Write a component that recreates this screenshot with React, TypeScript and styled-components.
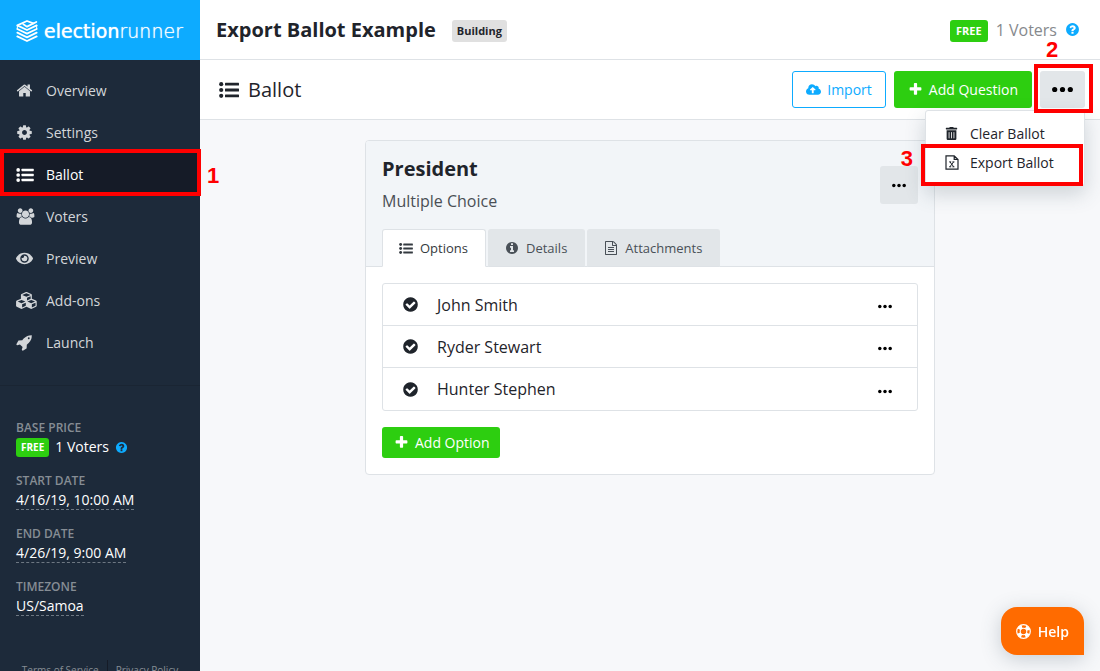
import React from 'react';
import styled, { createGlobalStyle, css } from 'styled-components';
import { FaEye, FaCloudUploadAlt, FaTrashAlt } from 'react-icons/fa';

const color = {
  blue: '#0dabff',
  green: '#2dce10',
  orange: '#ff6b00',
  red: '#ff0000',
  ink: '#1f242b',
  muted: '#86898d',
  line: '#dee2e6',
  grey: '#e2e6e9',
  sidebar: '#1d2a3a',
  sidebarActive: '#151b27',
};

const GlobalStyle = createGlobalStyle`
  *, *::before, *::after { box-sizing: border-box; }
  body {
    margin: 0;
    background: #f7f8fa;
    color: ${color.ink};
    font-family: 'Open Sans', 'Noto Sans', sans-serif;
    font-size: 16px;
    line-height: 24px;
  }
  h1, h2, h3, p, ul, dl, dd { margin: 0; padding: 0; }
  ul { list-style: none; }
  button { font-family: inherit; margin: 0; cursor: pointer; }
  a { color: inherit; text-decoration: none; }
  svg { display: block; flex: none; }
`;

/* ---------- icons ---------- */

type IconProps = { size?: number };

const glyph = (d: string, w = 1792, h = 1792) => ({ size = 16 }: IconProps) => (
  <svg height={size} width={Math.round((size * w) / h)} viewBox={`0 0 ${w} ${h}`} fill="currentColor" aria-hidden="true">
    <path d={d} />
  </svg>
);

const disc = 'q0 209-103 385.5t-279.5 279.5-385.5 103-385.5-103-279.5-279.5-103-385.5 103-385.5 279.5-279.5 385.5-103 385.5 103 279.5 279.5 103 385.5z';

const HomeIcon = glyph('M1472 992v480q0 26-19 45t-45 19h-384v-384h-256v384h-384q-26 0-45-19t-19-45v-480q0-1 .5-3t.5-3l575-474 575 474q1 2 1 6zm223-69l-62 74q-8 9-21 11h-3q-13 0-21-7l-692-577-692 577q-12 8-24 7-13-2-21-11l-62-74q-8-10-7-23.5t11-21.5l719-599q32-26 76-26t76 26l244 204v-195q0-14 9-23t23-9h192q14 0 23 9t9 23v408l219 182q10 8 11 21.5t-7 23.5z');
const CogIcon = glyph('M1152 896q0-106-75-181t-181-75-181 75-75 181 75 181 181 75 181-75 75-181zm512-109v222q0 12-8 23t-20 13l-185 28q-19 54-39 91 35 50 107 138 10 12 10 25t-9 23q-27 37-99 108t-94 71q-12 0-26-9l-138-108q-44 23-91 38-16 136-29 186-7 28-36 28h-222q-14 0-24.5-8.5t-11.5-21.5l-28-184q-49-16-90-37l-141 107q-10 9-25 9-14 0-25-11-126-114-165-168-7-10-7-23 0-12 8-23 15-21 51-66.5t54-70.5q-27-50-41-99l-183-27q-13-2-21-12.5t-8-23.5v-222q0-12 8-23t19-13l186-28q14-46 39-92-40-57-107-138-10-12-10-24 0-10 9-23 26-36 98.5-107.5t94.5-71.5q13 0 26 10l138 107q44-23 91-38 16-136 29-186 7-28 36-28h222q14 0 24.5 8.5t11.5 21.5l28 184q49 16 90 37l142-107q9-9 24-9 13 0 25 10 129 119 165 170 7 8 7 22 0 12-8 23-15 21-51 66.5t-54 70.5q26 50 41 98l183 28q13 2 21 12.5t8 23.5z');
const UsersIcon = glyph('M657 896q-162 5-265 128h-134q-82 0-138-40.5t-56-118.5q0-353 124-353 6 0 43.5 21t97.5 42.5 119 21.5q67 0 133-23-5 37-5 66 0 139 81 256zm1071 637q0 120-73 189.5t-194 69.5h-874q-121 0-194-69.5t-73-189.5q0-53 3.5-103.5t14-109 26.5-108.5 43-97.5 62-81 85.5-53.5 111.5-20q10 0 43 21.5t73 48 107 48 135 21.5 135-21.5 107-48 73-48 43-21.5q61 0 111.5 20t85.5 53.5 62 81 43 97.5 26.5 108.5 14 109 3.5 103.5zm-1024-1277q0 106-75 181t-181 75-181-75-75-181 75-181 181-75 181 75 75 181zm704 384q0 159-112.5 271.5t-271.5 112.5-271.5-112.5-112.5-271.5 112.5-271.5 271.5-112.5 271.5 112.5 112.5 271.5zm576 225q0 78-56 118.5t-138 40.5h-134q-103-123-265-128 81-117 81-256 0-29-5-66 66 23 133 23 59 0 119-21.5t97.5-42.5 43.5-21q124 0 124 353zm-128-609q0 106-75 181t-181 75-181-75-75-181 75-181 181-75 181 75 75 181z', 2048);
const CubesIcon = glyph('M640 1632l384-192v-314l-384 164v342zm-64-454l404-173-404-173-404 173zm1088 454l384-192v-314l-384 164v342zm-64-454l404-173-404-173-404 173zm-448-293l384-165v-266l-384 164v267zm-64-379l441-189-441-189-441 189zm1088 518v416q0 36-19 67t-52 47l-448 224q-25 14-57 14t-57-14l-448-224q-4-2-7-4-2 2-7 4l-448 224q-25 14-57 14t-57-14l-448-224q-33-16-52-47t-19-67v-416q0-38 21.5-70t56.5-48l434-186v-400q0-38 21.5-70t56.5-48l448-192q23-10 50-10t50 10l448 192q35 16 56.5 48t21.5 70v400l434 186q36 16 57 48t21 70z', 2304);
const RocketIcon = glyph('M1440 448q0-40-28-68t-68-28-68 28-28 68 28 68 68 28 68-28 28-68zm224-288q0 249-75.5 430.5t-253.5 360.5q-81 80-195 176l-20 379q-2 16-16 26l-384 224q-7 4-16 4-12 0-23-9l-64-64q-13-14-8-32l85-276-281-281-276 85q-3 1-9 1-14 0-23-9l-64-64q-17-19-5-39l224-384q10-14 26-16l379-20q96-114 176-195 188-187 358-258t431-71q14 0 24 9.5t10 22.5z');
const PlusIcon = glyph('M1600 736v192q0 40-28 68t-68 28h-416v416q0 40-28 68t-68 28h-192q-40 0-68-28t-28-68v-416h-416q-40 0-68-28t-28-68v-192q0-40 28-68t68-28h416v-416q0-40 28-68t68-28h192q40 0 68 28t28 68v416h416q40 0 68 28t28 68z');
const CheckIcon = glyph('M1412 734q0-28-18-46l-91-90q-19-19-45-19t-45 19l-408 407-226-226q-19-19-45-19t-45 19l-91 90q-18 18-18 46 0 27 18 45l362 362q19 19 45 19 27 0 46-19l543-543q18-18 18-45zm252 162' + disc);
const QuestionIcon = glyph('M1024 1376v-192q0-14-9-23t-23-9h-192q-14 0-23 9t-9 23v192q0 14 9 23t23 9h192q14 0 23-9t9-23zm256-672q0-88-55.5-163t-138.5-116-170-41q-243 0-371 213-15 24 8 42l132 100q7 6 19 6 16 0 25-12 53-68 86-92 34-24 86-24 48 0 85.5 26t37.5 59q0 38-20 61t-68 45q-63 28-115.5 86.5t-52.5 125.5v36q0 14 9 23t23 9h192q14 0 23-9t9-23q0-19 21.5-49.5t54.5-49.5q32-18 49-28.5t46-35 44.5-48 28-60.5 12.5-81zm384 192' + disc);
const InfoIcon = glyph('M1152 1376v-160q0-14-9-23t-23-9h-96v-512q0-14-9-23t-23-9h-320q-14 0-23 9t-9 23v160q0 14 9 23t23 9h96v320h-96q-14 0-23 9t-9 23v160q0 14 9 23t23 9h448q14 0 23-9t9-23zm-128-896v-160q0-14-9-23t-23-9h-192q-14 0-23 9t-9 23v160q0 14 9 23t23 9h192q14 0 23-9t9-23zm640 416' + disc);
const FileTextIcon = glyph('M1596 380q28 28 48 76t20 88v1152q0 40-28 68t-68 28h-1344q-40 0-68-28t-28-68v-1600q0-40 28-68t68-28h896q40 0 88 20t76 48zm-444-244v376h376q-10-29-22-41l-313-313q-12-12-41-22zm384 1528v-1024h-416q-40 0-68-28t-28-68v-416h-768v1536h1280zm-1024-864q0-14 9-23t23-9h704q14 0 23 9t9 23v64q0 14-9 23t-23 9h-704q-14 0-23-9t-9-23v-64zm736 224q14 0 23 9t9 23v64q0 14-9 23t-23 9h-704q-14 0-23-9t-9-23v-64q0-14 9-23t23-9h704zm0 256q14 0 23 9t9 23v64q0 14-9 23t-23 9h-704q-14 0-23-9t-9-23v-64q0-14 9-23t23-9h704z');

const ListIcon = ({ size = 18 }: IconProps) => (
  <svg width={size} height={Math.round(size * 0.8)} viewBox="0 0 20 16" fill="currentColor" aria-hidden="true">
    {[2.2, 8, 13.8].map((y) => (
      <g key={y}>
        <circle cx="2.2" cy={y} r="2.1" />
        <rect x="6" y={y - 1.4} width="14" height="2.8" rx="0.5" />
      </g>
    ))}
  </svg>
);

const DotsIcon = ({ size = 14 }: IconProps) => (
  <svg width={size} height={Math.round(size / 3)} viewBox="0 0 21 7" fill="#000" aria-hidden="true">
    <circle cx="2.7" cy="3.5" r="2.6" />
    <circle cx="10.5" cy="3.5" r="2.6" />
    <circle cx="18.3" cy="3.5" r="2.6" />
  </svg>
);

const FileExcelIcon = () => (
  <svg width="14" height="15" viewBox="0 0 14 15" fill="none" stroke="currentColor" strokeWidth="1.2" aria-hidden="true">
    <path d="M1 .8h8.2L13 4.4v9.8H1z M9.2 .8v3.6H13" />
    <path d="M5 6.9l3.6 4.8M8.6 6.9L5 11.7M4.2 6.9h2M7.4 6.9h2M4.2 11.8h2M7.4 11.8h2" strokeWidth="1" />
  </svg>
);

const LifeRingIcon = () => (
  <svg width="15" height="15" viewBox="0 0 30 30" fill="none" stroke="currentColor" aria-hidden="true">
    <circle cx="15" cy="15" r="13.6" strokeWidth="2.4" />
    <circle cx="15" cy="15" r="6.6" strokeWidth="2.2" />
    <circle cx="15" cy="15" r="10" strokeWidth="7" pathLength="8" strokeDasharray="1 1" strokeDashoffset="-0.5" />
  </svg>
);

const LogoMark = () => (
  <svg width="22" height="22" viewBox="0 0 66 66" fill="none" stroke="#fff" strokeWidth="5.5" strokeLinejoin="round" strokeLinecap="round" aria-hidden="true">
    <path d="M52 10L33 3 4 16l29 14 29-14" />
    <path d="M22 13l11 7 28-14" />
    <path d="M4 27l29 14 29-14" />
    <path d="M4 38l29 14 29-14" />
    <path d="M4 49l29 14 29-14" />
    <path d="M4 16v11M62 16v11" strokeWidth="3" />
  </svg>
);

/* ---------- shell ---------- */

const Shell = styled.div`
  display: grid;
  grid-template-columns: 200px minmax(0, 1fr);
  height: 100vh;
  overflow: hidden;
`;

const Sidebar = styled.aside`
  position: relative;
  z-index: 1;
  display: flex;
  flex-direction: column;
  background: ${color.sidebar};
  color: #fff;
  min-height: 0;
`;

const Brand = styled.a`
  display: flex;
  align-items: center;
  gap: 6px;
  flex: none;
  height: 60px;
  padding: 2px 16px 0;
  background: ${color.blue};
  font-family: 'DejaVu Sans', sans-serif;
  font-size: 19px;
  text-shadow: 0 0 1px #fff;
`;

const BrandLight = styled.span`
  font-weight: 200;
`;

const NavList = styled.ul`
  padding: 9px 0 22px;
  border-bottom: 1px solid #1a2533;
`;

const NavItem = styled.li`
  position: relative;
`;

const NavLink = styled.a<{ $active?: boolean }>`
  display: grid;
  grid-template-columns: 30px 1fr;
  align-items: center;
  height: 42px;
  padding: 1px 16px 0;
  font-size: 14px;
  font-weight: 500;
  color: ${(p) => (p.$active ? '#fff' : '#d3d6d9')};
  background: ${(p) => (p.$active ? color.sidebarActive : 'transparent')};
`;

const Facts = styled.dl`
  display: flex;
  flex-direction: column;
  gap: 15px;
  padding: 33px 16px 0;
`;

const FactLabel = styled.dt`
  font-size: 12px;
  font-weight: 600;
  line-height: 18px;
  color: #868d94;
`;

const FactValue = styled.dd`
  display: flex;
  align-items: center;
  gap: 6px;
  height: 20px;
  font-size: 14px;
`;

const EditLink = styled.a`
  line-height: 19px;
  border-bottom: 1px dashed #6d7782;
`;

const FootLinks = styled.nav`
  display: flex;
  justify-content: center;
  margin-top: 44px;
  font-size: 10px;
  line-height: 20px;
  color: #868d94;

  a { padding: 0 8px; }
  a + a { border-left: 1px solid #151b27; }
`;

const Main = styled.main`
  min-width: 0;
`;

const Bar = styled.header`
  display: flex;
  align-items: center;
  justify-content: space-between;
  height: 60px;
  padding: 0 20px 0 16px;
  background: #fff;
  border-bottom: 1px solid ${color.line};
`;

const ToolBar = styled(Bar)`
  padding-right: 15px;
`;

const Group = styled.div<{ $gap?: number }>`
  display: flex;
  align-items: center;
  gap: ${(p) => p.$gap ?? 8}px;
`;

const Title = styled.h1`
  font-size: 20px;
  font-weight: 700;
  line-height: 28px;
`;

const SubTitle = styled.h2`
  display: flex;
  align-items: center;
  gap: 9px;
  padding-left: 3px;
  font-size: 20px;
  font-weight: 400;
  line-height: 28px;
`;

const Badge = styled.span<{ $free?: boolean; $small?: boolean }>`
  margin-top: 2px;
  padding: 0 5px;
  border-radius: 3px;
  font-size: 11px;
  font-weight: 700;
  line-height: 22px;
  background: #e0e0e0;
  ${(p) => p.$free && css`
    padding: 0 6px;
    color: #fff;
    background: ${color.green};
  `}
  ${(p) => p.$small && css`
    margin-top: 0;
    padding: 0 5px;
    font-size: 10px;
    line-height: 19px;
  `}
`;

const VoterCount = styled.span`
  color: ${color.muted};
`;

const HelpMark = styled.span`
  color: ${color.blue};
`;

/* ---------- controls ---------- */

const Button = styled.button<{ $kind?: 'primary' | 'outline' | 'grey' | 'plain' }>`
  display: flex;
  align-items: center;
  justify-content: center;
  gap: 6px;
  height: 37px;
  padding: 0 13px;
  border: 1px solid transparent;
  border-radius: 3px;
  font-size: 14px;
  font-weight: 500;
  color: #fff;
  background: ${color.green};
  ${(p) => p.$kind === 'outline' && css`
    color: ${color.blue};
    border-color: ${color.blue};
    background: #fff;
  `}
  ${(p) => p.$kind === 'grey' && css`background: ${color.grey};`}
  ${(p) => p.$kind === 'plain' && css`background: transparent;`}
`;

const SmallButton = styled(Button)`
  height: 31px;
  padding: 0 9px 0 11px;
`;

const MoreButton = styled(Button)`
  width: 45px;
  padding: 0;
`;

const CardMore = styled(Button)`
  width: 38px;
  height: 38px;
  padding: 0;
`;

const MenuAnchor = styled.div`
  position: relative;
`;

const Menu = styled.ul`
  position: absolute;
  z-index: 2;
  top: 39px;
  right: 0;
  width: 160px;
  padding: 8px 0;
  background: #fff;
  border: 1px solid ${color.line};
  border-radius: 3px;
  box-shadow: 0 8px 20px rgba(60, 80, 95, 0.22);
`;

const MenuItem = styled.li`
  position: relative;
`;

const MenuButton = styled.button`
  display: grid;
  grid-template-columns: 25px 1fr;
  align-items: center;
  width: 100%;
  height: 29px;
  padding: 0 0 0 19px;
  border: 0;
  background: transparent;
  color: ${color.ink};
  font-size: 14px;
  font-weight: 500;
  text-align: left;
`;

const HelpButton = styled.button`
  position: fixed;
  right: 16px;
  bottom: 16px;
  display: flex;
  align-items: center;
  gap: 7px;
  height: 48px;
  padding: 0 15px;
  border: 0;
  border-radius: 16px 16px 0 16px;
  background: ${color.orange};
  color: #fff;
  font-size: 14px;
  font-weight: 600;
  box-shadow: 0 4px 20px rgba(60, 80, 95, 0.25);
`;

/* ---------- numbered walkthrough marks ---------- */

const Frame = styled.span<{ $inset: string }>`
  position: absolute;
  z-index: 3;
  inset: ${(p) => p.$inset};
  border: 4px solid ${color.red};
  pointer-events: none;
`;

const Step = styled.span`
  position: absolute;
  z-index: 3;
  color: ${color.red};
  font-family: 'Liberation Sans', Arial, sans-serif;
  font-size: 22px;
  font-weight: 700;
  line-height: 16px;
`;

const StepRight = styled(Step)`
  left: 100%;
  top: 15px;
  margin-left: 7px;
`;

const StepAbove = styled(Step)`
  left: 6px;
  bottom: 50px;
`;

const StepLeft = styled(Step)`
  right: 100%;
  top: 3px;
  margin-right: 13px;
`;

/* ---------- question card ---------- */

const Content = styled.div`
  padding: 20px 16px;
`;

const Card = styled.section`
  max-width: 570px;
  margin: 0 auto;
  background: #fff;
  border: 1px solid ${color.line};
  border-radius: 4px;
`;

const CardHead = styled.div`
  padding: 12px 16px 0;
  background: #f2f5f8;
  border-bottom: 1px solid ${color.line};
  border-radius: 3px 3px 0 0;
`;

const CardTop = styled.div`
  display: flex;
  justify-content: space-between;
  align-items: center;
`;

const CardTitle = styled.h3`
  font-size: 20px;
  font-weight: 700;
  line-height: 32px;
`;

const CardKind = styled.p`
  color: #4a4f55;
  line-height: 32px;
`;

const Tabs = styled.div`
  display: flex;
  gap: 2px;
  margin-top: 12px;
  margin-bottom: -1px;
`;

const Tab = styled.button<{ $active?: boolean }>`
  display: flex;
  align-items: center;
  gap: 7px;
  height: 38px;
  padding: 0 17px 0 16px;
  border: 1px solid ${(p) => (p.$active ? color.line : color.grey)};
  border-bottom-color: ${(p) => (p.$active ? '#fff' : color.line)};
  border-radius: 3px 3px 0 0;
  background: ${(p) => (p.$active ? '#fff' : color.grey)};
  color: ${(p) => (p.$active ? '#343a40' : '#495057')};
  font-size: 13px;
  font-weight: 500;
`;

const CardBody = styled.div`
  display: flex;
  flex-direction: column;
  align-items: flex-start;
  gap: 16px;
  padding: 16px;
`;

const Options = styled.ul`
  width: 100%;
  border: 1px solid ${color.line};
  border-radius: 3px;
`;

const OptionRow = styled.li`
  display: grid;
  grid-template-columns: 35px 1fr 38px;
  align-items: center;
  height: 42px;
  padding: 0 13px 0 19px;
  &:not(:last-child) { border-bottom: 1px solid ${color.line}; }
`;

const RowMore = styled(CardMore)`
  height: 32px;
  margin-top: 4px;
`;

const navItems = [
  { label: 'Overview', icon: <HomeIcon size={17} /> },
  { label: 'Settings', icon: <CogIcon size={17} /> },
  { label: 'Ballot', icon: <ListIcon />, active: true },
  { label: 'Voters', icon: <UsersIcon size={17} /> },
  { label: 'Preview', icon: <FaEye size={17} /> },
  { label: 'Add-ons', icon: <CubesIcon size={17} /> },
  { label: 'Launch', icon: <RocketIcon size={17} /> },
];

const facts = [
  { label: 'START DATE', value: '4/16/19, 10:00 AM' },
  { label: 'END DATE', value: '4/26/19, 9:00 AM' },
  { label: 'TIMEZONE', value: 'US/Samoa' },
];

const options = ['John Smith', 'Ryder Stewart', 'Hunter Stephen'];

export default function App() {
  return (
    <>
      <GlobalStyle />
      <Shell>
        <Sidebar>
          <Brand href="#">
            <LogoMark />
            <span>election<BrandLight>runner</BrandLight></span>
          </Brand>
          <nav>
            <NavList>
              {navItems.map((item) => (
                <NavItem key={item.label}>
                  <NavLink href="#" $active={item.active}>
                    {item.icon}
                    {item.label}
                  </NavLink>
                  {item.active && (
                    <>
                      <Frame $inset="-4px -1px -1px 0" />
                      <StepRight>1</StepRight>
                    </>
                  )}
                </NavItem>
              ))}
            </NavList>
          </nav>
          <Facts>
            <div>
              <FactLabel>BASE PRICE</FactLabel>
              <FactValue>
                <Badge $free $small>FREE</Badge>
                1 Voters
                <HelpMark><QuestionIcon size={13} /></HelpMark>
              </FactValue>
            </div>
            {facts.map((fact) => (
              <div key={fact.label}>
                <FactLabel>{fact.label}</FactLabel>
                <FactValue><EditLink href="#">{fact.value}</EditLink></FactValue>
              </div>
            ))}
          </Facts>
          <FootLinks>
            <a href="#">Terms of Service</a>
            <a href="#">Privacy Policy</a>
          </FootLinks>
        </Sidebar>

        <Main>
          <Bar>
            <Group $gap={16}>
              <Title>Export Ballot Example</Title>
              <Badge>Building</Badge>
            </Group>
            <Group>
              <Badge $free>FREE</Badge>
              <VoterCount>1 Voters</VoterCount>
              <HelpMark><QuestionIcon size={15} /></HelpMark>
            </Group>
          </Bar>
          <ToolBar as="div">
            <SubTitle><ListIcon size={20} />Ballot</SubTitle>
            <Group>
              <Button $kind="outline"><FaCloudUploadAlt size={15} />Import</Button>
              <Button><PlusIcon size={15} />Add Question</Button>
              <MenuAnchor>
                <MoreButton $kind="grey" aria-label="Ballot actions"><DotsIcon size={21} /></MoreButton>
                <Frame $inset="-7px -8px -5px -6px" />
                <StepAbove>2</StepAbove>
                <Menu>
                  <MenuItem>
                    <MenuButton><FaTrashAlt size={13} />Clear Ballot</MenuButton>
                  </MenuItem>
                  <MenuItem>
                    <MenuButton><FileExcelIcon />Export Ballot</MenuButton>
                    <Frame $inset="-4px 1px -9px -5px" />
                    <StepLeft>3</StepLeft>
                  </MenuItem>
                </Menu>
              </MenuAnchor>
            </Group>
          </ToolBar>

          <Content>
            <Card>
              <CardHead>
                <CardTop>
                  <div>
                    <CardTitle>President</CardTitle>
                    <CardKind>Multiple Choice</CardKind>
                  </div>
                  <CardMore $kind="grey" aria-label="Question actions"><DotsIcon /></CardMore>
                </CardTop>
                <Tabs role="tablist">
                  <Tab role="tab" aria-selected="true" $active><ListIcon size={14} />Options</Tab>
                  <Tab role="tab" aria-selected="false"><InfoIcon size={14} />Details</Tab>
                  <Tab role="tab" aria-selected="false"><FileTextIcon size={14} />Attachments</Tab>
                </Tabs>
              </CardHead>
              <CardBody>
                <Options>
                  {options.map((name) => (
                    <OptionRow key={name}>
                      <CheckIcon size={17} />
                      {name}
                      <RowMore $kind="plain" aria-label={`Actions for ${name}`}><DotsIcon /></RowMore>
                    </OptionRow>
                  ))}
                </Options>
                <SmallButton><PlusIcon size={15} />Add Option</SmallButton>
              </CardBody>
            </Card>
          </Content>
        </Main>
      </Shell>
      <HelpButton><LifeRingIcon />Help</HelpButton>
    </>
  );
}
